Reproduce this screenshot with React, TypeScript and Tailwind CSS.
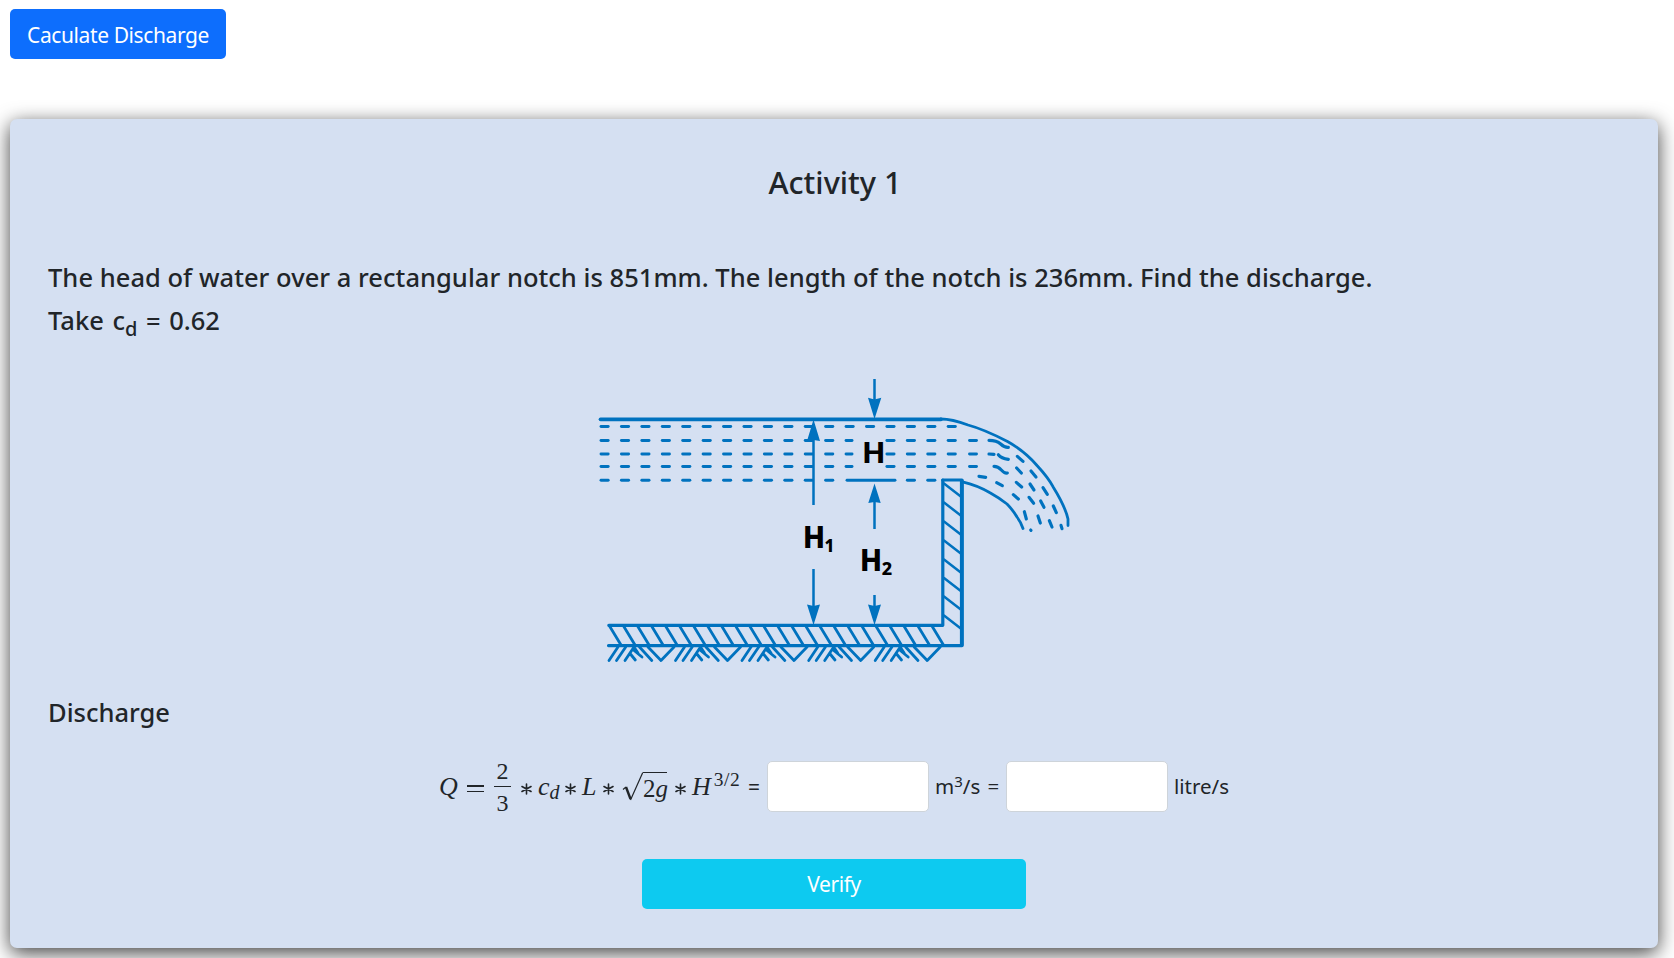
import React from "react";

const INK = "#0072bf";

const cols = Array.from({ length: 18 }, (_, i) => 601 + i * 20.42);
const rows = [426.5, 440.5, 454, 466.5, 480.3];
const wallHatch = [484, 503, 522, 541, 560, 578.5, 597, 616];
const floorHatch = Array.from({ length: 24 }, (_, i) => 609.5 + i * 14.02);
const soil = [0, 66.5, 133, 199.7, 266.2];

const spray = [
  "M597 211Q620 211 632 222T655 232",
  "M597 252L612 253",
  "M625 254Q634 265 655 268",
  "M612 289Q624 289 634 300T652 309",
  "M567 319L587 322",
  "M620 338L637 347",
  "M670 374L685 387",
  "M703 425L709 447",
  "M722 480L723 481",
  "M682 259L699 274",
  "M680 294L694 309",
  "M679 337L695 351",
  "M723 303L738 321",
  "M720 342L732 360",
  "M759 353L772 373",
  "M717 382L731 400",
  "M752 393L762 412",
  "M790 408L799 428",
  "M744 438L751 459",
  "M778 452L786 471",
  "M813 466L816 476",
];

function hasDash(row: number, col: number) {
  if (row === 0) return col < 18;
  if (row === 4) return col < 12 || (col > 14 && col < 17);
  return col !== 13;
}

function NotchDiagram() {
  return (
    <svg
      viewBox="590 370 490 300"
      width="490"
      height="300"
      fill="none"
      stroke={INK}
      strokeLinecap="round"
      strokeLinejoin="round"
      className="block"
    >
      <path d="M600.5 419.3H941" strokeWidth="3.7" />
      <path
        d="M941 419C950 419 960 422 968 425C983 429 995 435 1008 441.7C1019 448 1029 456 1037 465.5C1043 472 1049 479 1053 486.7C1060 498 1066 510 1068 519V525.5"
        strokeWidth="2.8"
      />
      <path
        d="M962.5 481.8C972 484 982 488 990 492.7C996 496 1002 500 1007 504C1011 508 1014 512 1017 517C1020 521 1022 525 1023 528.5"
        strokeWidth="2.8"
      />
      <g strokeWidth="2.9">
        {rows.map((y, r) =>
          cols.map((x, c) => {
            if (!hasDash(r, c)) return null;
            const end = r > 0 && c === 12 ? x + 6 : x + 7.2;
            return <path key={`${r}-${c}`} d={`M${x} ${y}H${end}`} />;
          })
        )}
        {[440.5, 454, 466.5].map((y) => (
          <path key={y} d={`M969.5 ${y}H976.5`} />
        ))}
        <path d="M847 480.3H895" />
      </g>
      <g transform="translate(790 370) scale(0.33333)" strokeWidth="9.5">
        {spray.map((d) => (
          <path key={d} d={d} />
        ))}
      </g>
      <g strokeWidth="3.2">
        <path d="M942.8 480H962V645.6H608.5" />
        <path d="M942.8 480V625.3H608.8" />
      </g>
      <path d="M961.8 481V645" strokeWidth="3.8" />
      <g strokeWidth="2.5">
        {wallHatch.map((y) => (
          <path key={y} d={`M944 ${y - 0.5}L960.8 ${y + 12.5}`} />
        ))}
      </g>
      <g strokeWidth="2.8">
        {floorHatch.map((x) => (
          <path key={x} d={`M${x} 626L${x + 11.5} 645`} />
        ))}
        {soil.map((dx) => (
          <g key={dx} transform={`translate(${dx} 0)`}>
            <path d="M618 647L609 660.5M625.7 647L616.5 660.5M634 647L625 660.5M630 653.5L635.3 660M633.5 650L642 657M634 647L638 653M639.5 647L651.8 660.5M648 647L661 660.5L674 647" />
          </g>
        ))}
      </g>
      <g strokeWidth="2.5" strokeLinecap="butt">
        <path d="M813.5 505V424M813.5 569V620M874.5 379V414M874.5 529V488M874.5 595V620" />
      </g>
      <g fill={INK} stroke="none">
        <path d="M813.5 419.5L820 441L813.5 440L807 441Z" />
        <path d="M813.5 625L807 604.5L813.5 606L820 604.5Z" />
        <path d="M874.5 419L868 397.8L874.5 399.5L881.3 397.8Z" />
        <path d="M874.5 483.5L868.3 503L874.5 502L880.7 503Z" />
        <path d="M874.5 625L868 604.5L874.5 606L881 604.5Z" />
      </g>
      <g
        fill="#000"
        stroke="none"
        fontWeight="700"
        fontFamily="'Noto Sans', 'Open Sans', sans-serif"
      >
        <text x="861.7" y="463.3" fontSize="28.5" textLength="24" lengthAdjust="spacingAndGlyphs">H</text>
        <text x="802.8" y="548" fontSize="29.5" fontWeight="800" textLength="22.5" lengthAdjust="spacingAndGlyphs">H</text>
        <text x="824.5" y="551.8" fontSize="17" fontWeight="800">1</text>
        <text x="859.8" y="571.3" fontSize="29.5" fontWeight="800" textLength="22.5" lengthAdjust="spacingAndGlyphs">H</text>
        <text x="881.8" y="575.3" fontSize="18" fontWeight="800">2</text>
      </g>
    </svg>
  );
}

function Equals({ className }: { className: string }) {
  return (
    <span className={className}>
      <span className="flex h-[7px] w-[17px] flex-col justify-between">
        <span className="h-[1.5px] bg-[#212529]" />
        <span className="h-[1.5px] bg-[#212529]" />
      </span>
    </span>
  );
}

function Formula() {
  return (
    <div className="flex h-[54px] w-[328px] items-center font-['Liberation_Serif',serif] text-[26px] leading-8 text-[#212529]">
      <span className="w-[28px] italic">Q</span>
      <Equals className="w-[27px] pt-[4px]" />
      <span className="flex w-[17px] flex-col items-center text-[24px] leading-[28px]">
        <span className="h-[29px]">2</span>
        <span className="h-[1.5px] w-[17px] bg-[#212529]" />
        <span className="h-[29px] pt-[2px]">3</span>
      </span>
      <Star className="w-[27px] pt-[4px] pl-[10px]" />
      <span className="w-[27px] italic">
        c<span className="relative top-[4px] text-[20px] leading-none">d</span>
      </span>
      <Star className="w-[17px] pt-[4px]" />
      <span className="w-[21px] italic">L</span>
      <Star className="w-[19px] pt-[4px]" />
      <span className="flex w-[53px] items-center">
        <svg width="21" height="30" viewBox="0 0 21 30" fill="none" stroke="#212529" className="shrink-0">
          <path d="M1 17.5L4 15" strokeWidth="1.2" />
          <path d="M4 15L8.5 27" strokeWidth="2.4" />
          <path d="M8.5 28L20.5 1.2H21" strokeWidth="1.2" />
        </svg>
        <span className="h-[30px] w-[24px] border-t-[1.5px] border-[#212529] text-[25px] leading-[31px] whitespace-nowrap">
          2<span className="italic">g</span>
        </span>
      </span>
      <Star className="w-[17px] pt-[4px]" />
      <span className="w-[56px] whitespace-nowrap italic">
        H
        <span className="relative -top-[9px] ml-[3px] text-[19.5px] leading-none tracking-[0.5px] not-italic">3/2</span>
      </span>
      <span className="font-['Noto_Sans',sans-serif] text-[21px]">=</span>
    </div>
  );
}

function Star({ className }: { className: string }) {
  return (
    <span className={className}>
      <svg width="11" height="12" viewBox="0 0 11 12" stroke="#212529" strokeWidth="1.6" strokeLinecap="round" className="block">
        <path d="M5.5 1V11M1 3.5L10 8.5M10 3.5L1 8.5" />
      </svg>
    </span>
  );
}

export default function App() {
  return (
    <div className="h-[958px] overflow-hidden bg-white px-[10px] pt-[9px] font-['Noto_Sans','Open_Sans',sans-serif] text-[20.5px] text-[#212529]">
      <button className="block h-[50px] w-[216px] rounded-[5px] bg-[#0d6efd] pt-[3px] text-center text-[21px] tracking-[-0.4px] whitespace-nowrap text-white">
        Caculate Discharge
      </button>
      <main className="mt-[60px] flex h-[829px] w-[1648px] flex-col rounded-[7px] bg-[#d5e0f2] px-[39px] pt-[42px] shadow-[0_5px_20px_rgba(0,0,0,0.75)]">
        <h4 className="pl-[2px] text-center text-[30.7px] leading-[42px] font-medium">Activity 1</h4>
        <div className="mt-[53px] -ml-px text-[25.5px] leading-[43px] font-medium">
          <p className="h-[43px] tracking-[0.03px] whitespace-nowrap">
            The head of water over a rectangular notch is 851mm. The length of the notch is 236mm. Find the discharge.
          </p>
          <p className="h-[43px] whitespace-nowrap [word-spacing:2px]">
            Take c<span className="relative top-[6px] text-[20px] leading-none">d</span> = 0.62
          </p>
        </div>
        <div className="mt-[28px] ml-[541px]">
          <NotchDiagram />
        </div>
        <h5 className="mt-[21px] -ml-px text-[25.5px] leading-[42px] font-medium">Discharge</h5>
        <div className="mt-[28px] ml-[390px] flex h-[51px] items-center">
          <Formula />
          <input className="h-[51px] w-[162px] rounded-[5px] border border-[#ced4da] bg-white px-3 outline-none" />
          <span className="w-[77px] pl-[6px] whitespace-nowrap [word-spacing:2px]">
            m<span className="relative -top-[7px] text-[15px] leading-none">3</span>/s =
          </span>
          <input className="h-[51px] w-[162px] rounded-[5px] border border-[#ced4da] bg-white px-3 outline-none" />
          <span className="pl-[6px]">litre/s</span>
        </div>
        <button className="mt-[47px] h-[50px] w-[384px] self-center rounded-[5px] bg-[#0dcaf0] pt-[2px] text-[21px] tracking-[-0.4px] text-white">
          Verify
        </button>
      </main>
    </div>
  );
}
